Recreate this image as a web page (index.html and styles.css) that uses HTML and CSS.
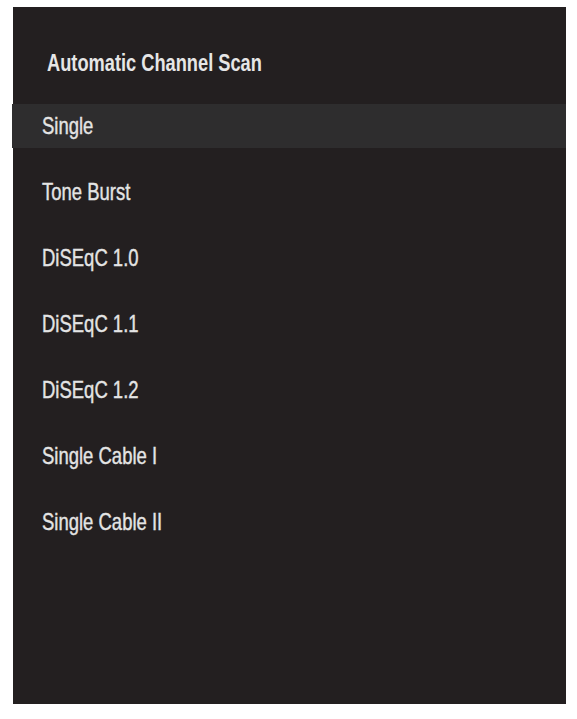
FILE: index.html
```html
<!DOCTYPE html>
<html>
<head>
<meta charset="utf-8">
<link rel="stylesheet" href="styles.css">
</head>
<body>
<div class="panel">
  <div class="header"><h1 class="title"><span class="txt">Automatic Channel Scan</span></h1></div>
  <ul class="list">
    <li class="item selected"><span class="txt">Single</span></li>
    <li class="item"><span class="txt">Tone Burst</span></li>
    <li class="item"><span class="txt">DiSEqC 1.0</span></li>
    <li class="item"><span class="txt">DiSEqC 1.1</span></li>
    <li class="item"><span class="txt">DiSEqC 1.2</span></li>
    <li class="item"><span class="txt">Single Cable I</span></li>
    <li class="item"><span class="txt">Single Cable II</span></li>
  </ul>
</div>
</body>
</html>
```
FILE: styles.css
```css
html, body {
  margin: 0;
  padding: 0;
  background: #ffffff;
}
body {
  width: 577px;
  height: 719px;
  overflow: hidden;
  font-family: "Liberation Sans", Arial, sans-serif;
}
.panel {
  margin: 7px 0 0 13px;
  width: 553px;
  height: 697px;
  background: #231f20;
  color: #e4e4e4;
  box-sizing: border-box;
}
.header {
  height: 97px;
  box-sizing: border-box;
  padding: 41px 0 0 34px;
}
.title {
  margin: 0;
  font-size: 24px;
  font-weight: bold;
  line-height: 30px;
  color: #e6e6e6;
  white-space: nowrap;
}
.title .txt {
  display: inline-block;
  transform: scaleX(0.76);
  transform-origin: left center;
}
.list {
  list-style: none;
  margin: 0;
  padding: 0;
  display: flex;
  flex-direction: column;
  gap: 22px;
}
.item {
  height: 44px;
  line-height: 44px;
  padding-left: 29px;
  font-size: 24px;
  color: #e4e4e4;
  white-space: nowrap;
}
.item .txt {
  display: inline-block;
  transform: scaleX(0.77);
  transform-origin: left center;
  -webkit-text-stroke: 0.4px #e4e4e4;
}
.item.selected {
  background: #2e2d2e;
  margin-left: -1px;
  padding-left: 30px;
}
```
